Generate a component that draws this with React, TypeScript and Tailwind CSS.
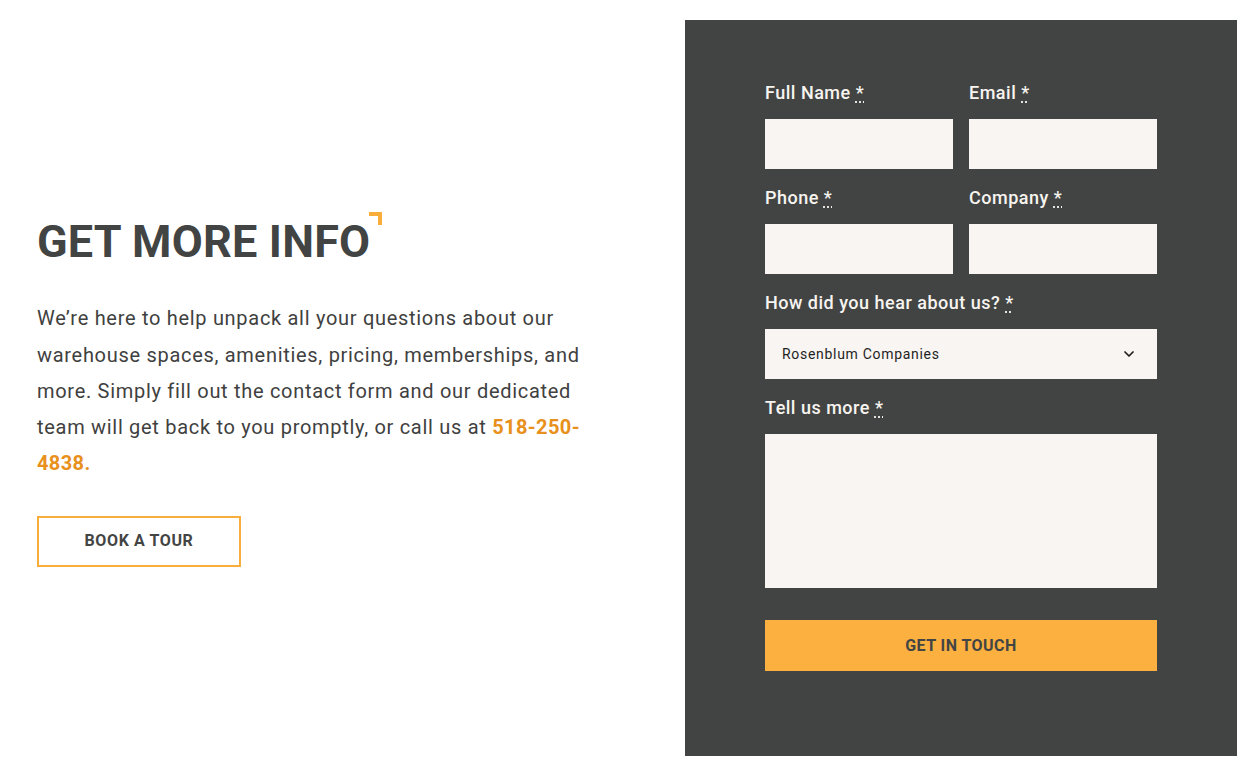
import React from "react";
import { ChevronDown } from "lucide-react";

const font = { fontFamily: "Roboto, 'Liberation Sans', sans-serif" };

function Label({ children }: { children: React.ReactNode }) {
  return (
    <label className="block text-[18px] leading-[27px] font-medium tracking-[0.5px] text-[#f7f4f0]">
      {children}{" "}
      <abbr title="required" className="underline decoration-dotted underline-offset-[3px]">*</abbr>
    </label>
  );
}

function Field({ label, wide }: { label: string; wide?: boolean }) {
  return (
    <div className={wide ? "col-span-2" : ""}>
      <Label>{label}</Label>
      <input className="mt-[13px] block h-[50px] w-full bg-[#f8f5f2] outline-none" />
    </div>
  );
}

export default function App() {
  return (
    <div style={font} className="flex h-[777px] w-[1249px] bg-white text-[#424443]">
      <div className="flex flex-1 items-center pl-[37px] pt-[9px]">
        <div>
          <h2 className="relative inline-block text-[45px] font-bold leading-[45px] tracking-[0.2px] text-[#424443]">
            GET MORE INFO
            <span className="absolute -right-[12px] -top-[7px] h-[13px] w-[13px] border-r-4 border-t-4 border-[#f9ad3b]" />
          </h2>
          <p className="mt-[36px] text-[20px] leading-[36.3px] tracking-[0.7px] text-[#3f4140]">
            We’re here to help unpack all your questions about our
            <br />
            warehouse spaces, amenities, pricing, memberships, and
            <br />
            more. Simply fill out the contact form and our dedicated
            <br />
            team will get back to you promptly, or call us at{" "}
            <span className="font-bold tracking-[0.4px] text-[#e8901c]">518-250-</span>
            <br />
            <span className="font-bold tracking-[0.4px] text-[#e8901c]">4838.</span>
          </p>
          <button className="mt-[34px] flex h-[51px] w-[204px] items-center justify-center border-2 border-[#f9ad3b] text-[16px] font-bold tracking-[0.6px] text-[#434544]">
            BOOK A TOUR
          </button>
        </div>
      </div>
      <div className="mb-[21px] mr-[12px] mt-[20px] w-[552px] bg-[#424443] px-[80px] pt-[59px]">
        <div className="grid grid-cols-2 gap-x-4 gap-y-[15px]">
          <Field label="Full Name" />
          <Field label="Email" />
          <Field label="Phone" />
          <Field label="Company" />
          <div className="col-span-2">
            <Label>How did you hear about us?</Label>
            <div className="mt-[13px] flex h-[50px] w-full items-center justify-between bg-[#f8f5f2] pl-[17px] pr-[20px]">
              <span className="text-[14px] tracking-[0.7px] text-[#1f1f1f]">Rosenblum Companies</span>
              <ChevronDown size={16} strokeWidth={2.6} className="text-[#1f1f1f]" />
            </div>
          </div>
          <div className="col-span-2">
            <Label>Tell us more</Label>
            <textarea className="mt-[13px] block h-[154px] w-full resize-none bg-[#f8f5f2] outline-none" />
          </div>
        </div>
        <button className="mt-[32px] flex h-[51px] w-full items-center justify-center bg-[#fbb040] text-[16px] font-bold tracking-[0.45px] text-[#434544]">
          GET IN TOUCH
        </button>
      </div>
    </div>
  );
}
